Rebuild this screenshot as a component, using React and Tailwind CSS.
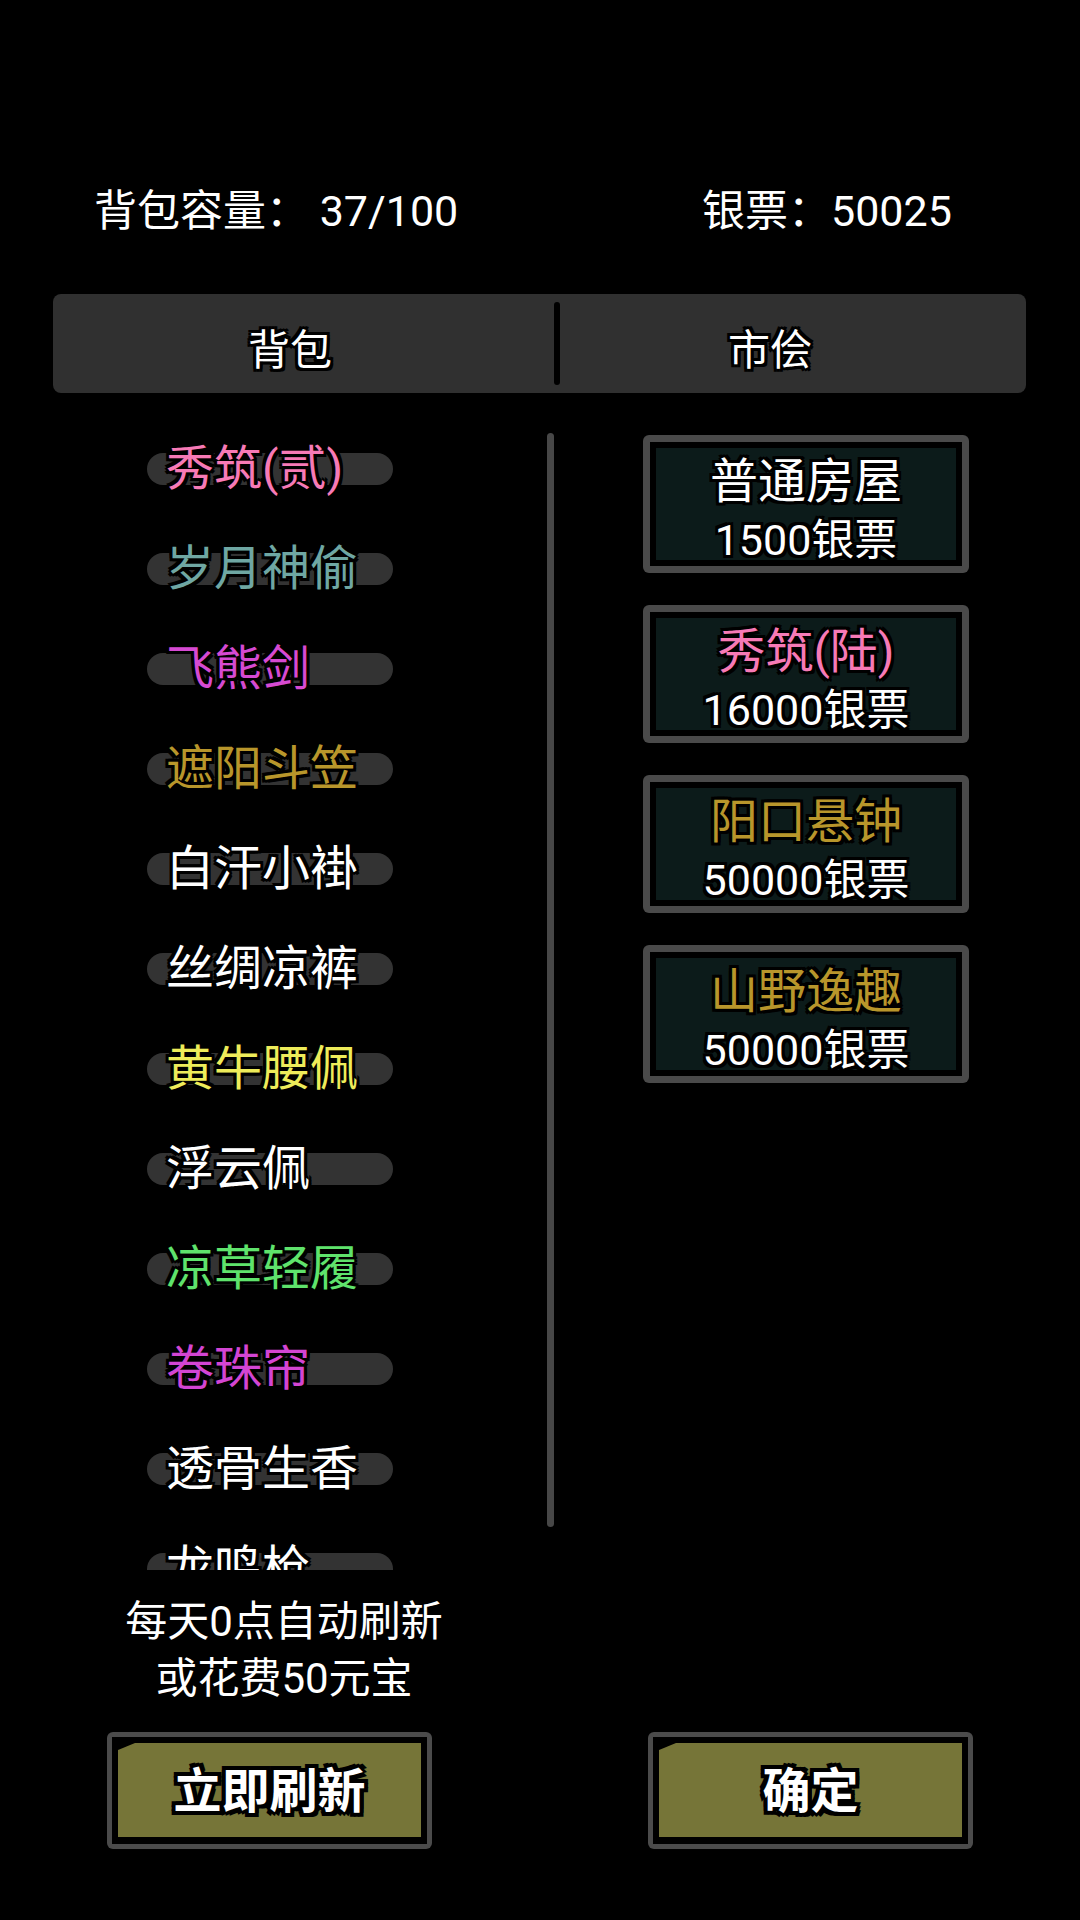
import React from "react";

// black outline round the game text (item names, tab labels, buttons)
const outline =
  "[text-shadow:-3px_-3px_0_#000,3px_-3px_0_#000,-3px_3px_0_#000,3px_3px_0_#000,0_-3px_0_#000,0_3px_0_#000,-3px_0_0_#000,3px_0_0_#000]";
const outlineThick =
  "[text-shadow:-4px_-4px_0_#000,4px_-4px_0_#000,-4px_4px_0_#000,4px_4px_0_#000,0_-4px_0_#000,0_4px_0_#000,-4px_0_0_#000,4px_0_0_#000]";

const bagItems = [
  { name: "秀筑(贰)", color: "text-[#f77ab6]" },
  { name: "岁月神偷", color: "text-[#6fa7a3]" },
  { name: "飞熊剑", color: "text-[#d64ad2]" },
  { name: "遮阳斗笠", color: "text-[#b8962b]" },
  { name: "白汗小褂", color: "text-white" },
  { name: "丝绸凉裤", color: "text-white" },
  { name: "黄牛腰佩", color: "text-[#eeec5a]" },
  { name: "浮云佩", color: "text-white" },
  { name: "凉草轻履", color: "text-[#5fe36c]" },
  { name: "卷珠帘", color: "text-[#d345d3]" },
  { name: "透骨生香", color: "text-white" },
  { name: "龙鸣枪", color: "text-white" },
];

const shopItems = [
  { name: "普通房屋", price: "1500银票", color: "text-white" },
  { name: "秀筑(陆)", price: "16000银票", color: "text-[#f77ab6]" },
  { name: "阳口悬钟", price: "50000银票", color: "text-[#b8962b]" },
  { name: "山野逸趣", price: "50000银票", color: "text-[#b8962b]" },
];

const BagRow = ({ item }) => (
  <div className="grid h-[100px] items-center">
    <div className="[grid-area:1/1] w-[246px] h-[32px] rounded-full bg-[#333333]" />
    <span
      className={`[grid-area:1/1] ml-[19px] text-[48px] leading-[56px] whitespace-nowrap ${item.color} ${outline}`}
    >
      {item.name}
    </span>
  </div>
);

const ShopCard = ({ item }) => (
  <div className="w-[326px] h-[138px] rounded-[6px] bg-[#4a4a4a] p-[7px]">
    <div className="h-full bg-black p-[6px]">
      <div className="h-full bg-[#0c1b1a] flex flex-col items-center">
        <span className={`mt-[9px] text-[48px] leading-[50px] whitespace-nowrap ${item.color} ${outline}`}>
          {item.name}
        </span>
        <span className={`mt-[8px] text-[43px] leading-[50px] text-white whitespace-nowrap ${outline}`}>
          {item.price}
        </span>
      </div>
    </div>
  </div>
);

const OliveButton = ({ label }) => (
  <div className="w-[325px] h-[117px] rounded-[6px] bg-[#4b4b4b] p-[5px]">
    <div className="h-full bg-black px-[6px] pt-[6px] pb-[7px]">
      <div className="h-full bg-[#767538] flex items-center justify-center [clip-path:polygon(17px_0,100%_0,100%_100%,0_100%,0_7px)]">
        <span className={`mt-[3px] text-[48px] leading-none font-bold text-white ${outlineThick}`}>{label}</span>
      </div>
    </div>
  </div>
);

export default function App() {
  return (
    <div className="w-[1080px] h-[1920px] bg-black overflow-hidden text-white font-['Roboto','Noto_Sans_CJK_SC',sans-serif]">
      {/* Header: capacity + silver */}
      <div className="flex pl-[94px] pt-[187px] text-[43px] leading-[48px]">
        <span className="w-[608px] whitespace-nowrap">背包容量： 37/100</span>
        <span className="whitespace-nowrap">银票：50025</span>
      </div>

      {/* Tabs */}
      <div className="mt-[59px] ml-[53px] w-[973px] h-[99px] rounded-[8px] bg-[#303030] flex items-center">
        <div className={`w-[474px] mt-[14px] text-center text-[42px] leading-none ${outline}`}>背包</div>
        <div className="ml-[27px] w-[6px] h-[83px] rounded-full bg-black" />
        <div className={`w-[420px] mt-[14px] text-center text-[42px] leading-none ${outline}`}>市侩</div>
      </div>

      {/* Bag list / shop */}
      <div className="flex pl-[147px]">
        <div className="mt-[26px] w-[400px] h-[1151px] overflow-hidden">
          {bagItems.map((item) => (
            <BagRow key={item.name} item={item} />
          ))}
        </div>
        <div className="mt-[40px] w-[7px] h-[1094px] rounded-full bg-[#474747]" />
        <div className="ml-[89px] mt-[42px] flex flex-col gap-[32px]">
          {shopItems.map((item) => (
            <ShopCard key={item.name} item={item} />
          ))}
        </div>
      </div>

      {/* Refresh hint */}
      <div className="mt-[23px] w-[568px] text-center text-[42px] leading-[57px]">
        <div>每天0点自动刷新</div>
        <div>或花费50元宝</div>
      </div>

      {/* Buttons */}
      <div className="mt-[25px] flex pl-[107px] gap-[216px]">
        <OliveButton label="立即刷新" />
        <OliveButton label="确定" />
      </div>
    </div>
  );
}
